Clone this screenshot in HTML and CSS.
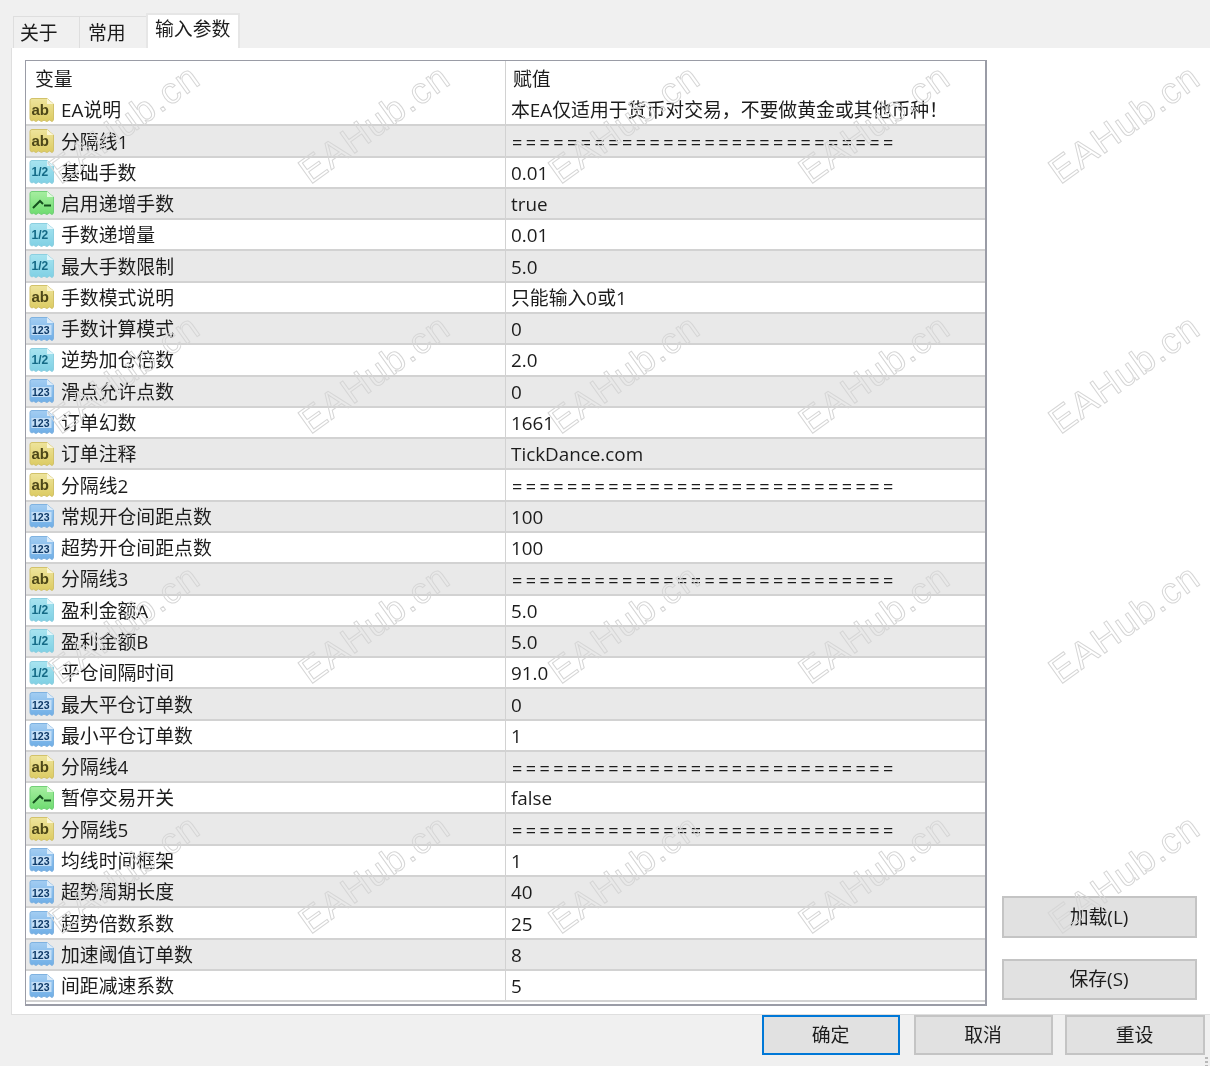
FILE: index.html
```html
<!DOCTYPE html>
<html lang="zh-CN">
<head>
<meta charset="utf-8">
<title>输入参数</title>
<link rel="stylesheet" href="styles.css">
</head>
<body>
<svg class="defs" width="0" height="0" aria-hidden="true">
  <defs>
    <path id="sheet" d="M3 1.5 H18 L24.5 7 V22 Q24.5 24 23 24.5 L20.5 23 L18 24.5 L15 23.2 L12.5 24.5 L9.5 23 L7 24.5 L4.5 23.2 L3 24 Q1 23.5 1 21.5 V3.5 Q1 1.5 3 1.5 Z"/>
    <linearGradient id="g-ab" x1="0" y1="0" x2="0" y2="1"><stop offset="0" stop-color="#eee49c"/><stop offset="1" stop-color="#dccb62"/></linearGradient>
    <linearGradient id="g-fr" x1="0" y1="0" x2="0" y2="1"><stop offset="0" stop-color="#a8e4f0"/><stop offset="1" stop-color="#7fd0e4"/></linearGradient>
    <linearGradient id="g-bo" x1="0" y1="0" x2="0" y2="1"><stop offset="0" stop-color="#a6eea0"/><stop offset="1" stop-color="#6edc70"/></linearGradient>
    <linearGradient id="g-nu" x1="0" y1="0" x2="0" y2="1"><stop offset="0" stop-color="#a3cdf2"/><stop offset="1" stop-color="#6faee6"/></linearGradient>
    <symbol id="ic-ab" viewBox="0 0 26 26"><use href="#sheet" fill="url(#g-ab)" stroke="#d2c26a"/><path d="M18 1.5 V7 H24.5 Z" fill="#fbf6d6"/><text x="2.5" y="17.5" class="ic-t ic-t-ab">ab</text></symbol>
    <symbol id="ic-fr" viewBox="0 0 26 26"><use href="#sheet" fill="url(#g-fr)" stroke="#8ccfe0"/><path d="M18 1.5 V7 H24.5 Z" fill="#e2f6fb"/><text x="2.5" y="16.5" class="ic-t ic-t-fr">1/2</text></symbol>
    <symbol id="ic-bo" viewBox="0 0 26 26"><use href="#sheet" fill="url(#g-bo)" stroke="#72cf78"/><path d="M18 1.5 V7 H24.5 Z" fill="#e2fbdf"/><path d="M4 18 L11 11 L14 14 M15 15.5 H22" fill="none" stroke="#14501e" stroke-width="2"/></symbol>
    <symbol id="ic-nu" viewBox="0 0 26 26"><use href="#sheet" fill="url(#g-nu)" stroke="#7fb2e0"/><path d="M18 1.5 V7 H24.5 Z" fill="#dcecfa"/><rect x="2.5" y="9" width="20" height="10" fill="#c5dff6"/><text x="3" y="17.8" class="ic-t ic-t-nu">123</text></symbol>
  </defs>
</svg>

<div class="tabs">
  <div class="tab">关于</div>
  <div class="tab">常用</div>
  <div class="tab tab-active">输入参数</div>
</div>

<main class="panel">
  <section class="grid">
    <div class="row head"><div class="name">变量</div><div class="val">赋值</div></div>
    <div class="row"><div class="name"><svg class="ic"><use href="#ic-ab"/></svg>EA说明</div><div class="val">本EA仅适用于货币对交易，不要做黄金或其他币种！</div></div>
    <div class="row"><div class="name"><svg class="ic"><use href="#ic-ab"/></svg>分隔线1</div><div class="val eq">============================</div></div>
    <div class="row"><div class="name"><svg class="ic"><use href="#ic-fr"/></svg>基础手数</div><div class="val">0.01</div></div>
    <div class="row"><div class="name"><svg class="ic"><use href="#ic-bo"/></svg>启用递增手数</div><div class="val">true</div></div>
    <div class="row"><div class="name"><svg class="ic"><use href="#ic-fr"/></svg>手数递增量</div><div class="val">0.01</div></div>
    <div class="row"><div class="name"><svg class="ic"><use href="#ic-fr"/></svg>最大手数限制</div><div class="val">5.0</div></div>
    <div class="row"><div class="name"><svg class="ic"><use href="#ic-ab"/></svg>手数模式说明</div><div class="val">只能输入0或1</div></div>
    <div class="row"><div class="name"><svg class="ic"><use href="#ic-nu"/></svg>手数计算模式</div><div class="val">0</div></div>
    <div class="row"><div class="name"><svg class="ic"><use href="#ic-fr"/></svg>逆势加仓倍数</div><div class="val">2.0</div></div>
    <div class="row"><div class="name"><svg class="ic"><use href="#ic-nu"/></svg>滑点允许点数</div><div class="val">0</div></div>
    <div class="row"><div class="name"><svg class="ic"><use href="#ic-nu"/></svg>订单幻数</div><div class="val">1661</div></div>
    <div class="row"><div class="name"><svg class="ic"><use href="#ic-ab"/></svg>订单注释</div><div class="val">TickDance.com</div></div>
    <div class="row"><div class="name"><svg class="ic"><use href="#ic-ab"/></svg>分隔线2</div><div class="val eq">============================</div></div>
    <div class="row"><div class="name"><svg class="ic"><use href="#ic-nu"/></svg>常规开仓间距点数</div><div class="val">100</div></div>
    <div class="row"><div class="name"><svg class="ic"><use href="#ic-nu"/></svg>超势开仓间距点数</div><div class="val">100</div></div>
    <div class="row"><div class="name"><svg class="ic"><use href="#ic-ab"/></svg>分隔线3</div><div class="val eq">============================</div></div>
    <div class="row"><div class="name"><svg class="ic"><use href="#ic-fr"/></svg>盈利金额A</div><div class="val">5.0</div></div>
    <div class="row"><div class="name"><svg class="ic"><use href="#ic-fr"/></svg>盈利金额B</div><div class="val">5.0</div></div>
    <div class="row"><div class="name"><svg class="ic"><use href="#ic-fr"/></svg>平仓间隔时间</div><div class="val">91.0</div></div>
    <div class="row"><div class="name"><svg class="ic"><use href="#ic-nu"/></svg>最大平仓订单数</div><div class="val">0</div></div>
    <div class="row"><div class="name"><svg class="ic"><use href="#ic-nu"/></svg>最小平仓订单数</div><div class="val">1</div></div>
    <div class="row"><div class="name"><svg class="ic"><use href="#ic-ab"/></svg>分隔线4</div><div class="val eq">============================</div></div>
    <div class="row"><div class="name"><svg class="ic"><use href="#ic-bo"/></svg>暂停交易开关</div><div class="val">false</div></div>
    <div class="row"><div class="name"><svg class="ic"><use href="#ic-ab"/></svg>分隔线5</div><div class="val eq">============================</div></div>
    <div class="row"><div class="name"><svg class="ic"><use href="#ic-nu"/></svg>均线时间框架</div><div class="val">1</div></div>
    <div class="row"><div class="name"><svg class="ic"><use href="#ic-nu"/></svg>超势周期长度</div><div class="val">40</div></div>
    <div class="row"><div class="name"><svg class="ic"><use href="#ic-nu"/></svg>超势倍数系数</div><div class="val">25</div></div>
    <div class="row"><div class="name"><svg class="ic"><use href="#ic-nu"/></svg>加速阈值订单数</div><div class="val">8</div></div>
    <div class="row"><div class="name"><svg class="ic"><use href="#ic-nu"/></svg>间距减速系数</div><div class="val">5</div></div>
  </section>
  <aside class="side">
    <button class="btn side-btn">加载(L)</button>
    <button class="btn side-btn">保存(S)</button>
  </aside>
</main>

<footer class="foot">
  <button class="btn foot-btn foot-primary">确定</button>
  <button class="btn foot-btn">取消</button>
  <button class="btn foot-btn foot-last">重设</button>
  <span class="grip"></span>
</footer>

<div class="marks" aria-hidden="true">
  <span>EAHub.cn</span><span>EAHub.cn</span><span>EAHub.cn</span><span>EAHub.cn</span><span>EAHub.cn</span>
  <span>EAHub.cn</span><span>EAHub.cn</span><span>EAHub.cn</span><span>EAHub.cn</span><span>EAHub.cn</span>
  <span>EAHub.cn</span><span>EAHub.cn</span><span>EAHub.cn</span><span>EAHub.cn</span><span>EAHub.cn</span>
  <span>EAHub.cn</span><span>EAHub.cn</span><span>EAHub.cn</span><span>EAHub.cn</span><span>EAHub.cn</span>
</div>
</body>
</html>
```
FILE: styles.css
```css
* { box-sizing: border-box; }
html, body { margin: 0; padding: 0; }
html { background: #f0f0f0; }
body {
  position: relative;
  width: 1210px;
  height: 1066px;
  overflow: hidden;
  background: #f0f0f0;
  color: #1c1c1c;
  font-family: "Open Sans", "Noto Sans CJK SC", sans-serif;
  font-size: 18.85px;
  line-height: 1;
  filter: blur(0.35px);
}
.defs { position: absolute; }

.tabs { display: flex; align-items: flex-end; height: 48px; padding-left: 13px; }
.tab {
  display: flex; align-items: center;
  width: 67px; height: 32px;
  padding: 1px 0 0 6px;
  background: #f0f0f0;
  border: 1px solid #dedede; border-bottom: 0;
}
.tab + .tab { border-left: 0; padding-left: 8px; }
.tab-active.tab-active { width: 94px; height: 35px; margin-left: -1px; padding: 0 0 4px 7px; background: #fff; border: 2px solid #e6e6e6; border-bottom: 0; }

.panel {
  display: flex;
  height: 967px;
  margin-left: 11px;
  padding: 12px 13px 9px 13px;
  background: #fff;
  border: 1px solid #dfdfdf;
  border-top: 0;
  border-right: 0;
}
.grid {
  width: 962px;
  height: 946px;
  border: 1px solid #9a9ca6;
  border-width: 1px 2px 2px 1px;
  background: #fff;
}
.row {
  display: grid;
  grid-template-columns: 479px 1fr;
  height: 31.286px;
  border-bottom: 2px solid #d2d2d2;
}
.row:nth-child(odd):not(.head) { background: #e9e9e9; }
.row.head { height: 34px; border-bottom: 0; }
.name, .val { display: flex; align-items: center; white-space: nowrap; padding-top: 2px; }
.name { gap: 6px; padding-left: 3px; }
.val { padding-left: 5px; border-left: 1px solid #d2d2d2; }
.head .name { padding-left: 9px; }
.head .val { padding-left: 7px; }
.eq { padding-left: 6px; letter-spacing: 3.45px; font-size: 18px; }
.ic { display: block; width: 26px; height: 26px; flex: none; margin-top: -2px; }
.ic-t { font-family: "Liberation Sans", sans-serif; font-weight: 700; }
.ic-t-ab { font-size: 15px; fill: #4d4718; }
.ic-t-fr { font-size: 12px; fill: #146a86; }
.ic-t-nu { font-size: 10.5px; fill: #0f3a68; }

.side { display: flex; flex-direction: column; justify-content: flex-end; gap: 21px; width: 195px; margin-left: 15px; padding-bottom: 5px; }
.btn {
  display: block;
  padding: 1px 1px 0 0;
  font: inherit;
  color: #1c1c1c;
  background: #e1e1e1;
  border: 2px solid #c4c4c4;
}
.side-btn { height: 41.5px; }

.foot { position: relative; display: flex; justify-content: flex-end; gap: 13px; padding-right: 5px; }
.foot-btn { width: 139px; height: 40px; }
.foot-primary { width: 138px; margin-right: 1px; border-color: #0078d7; }
.foot-last { width: 140px; margin-left: -1px; }
.grip { position: absolute; right: 2px; bottom: -11px; width: 3px; height: 9px; background: repeating-linear-gradient(#b8b8b8 0 2px, transparent 2px 4px); }

.marks {
  position: absolute;
  left: 0; top: -1px;
  display: grid;
  grid-template-columns: repeat(5, 250px);
  grid-auto-rows: 250px;
  pointer-events: none;
}
.marks span {
  align-self: center; justify-self: center;
  font-family: "Liberation Sans", sans-serif;
  font-size: 36.5px;
  letter-spacing: 1.4px;
  white-space: nowrap;
  color: transparent;
  -webkit-text-stroke: 1px #d6d6d6;
  transform: rotate(-35.7deg);
}
```
